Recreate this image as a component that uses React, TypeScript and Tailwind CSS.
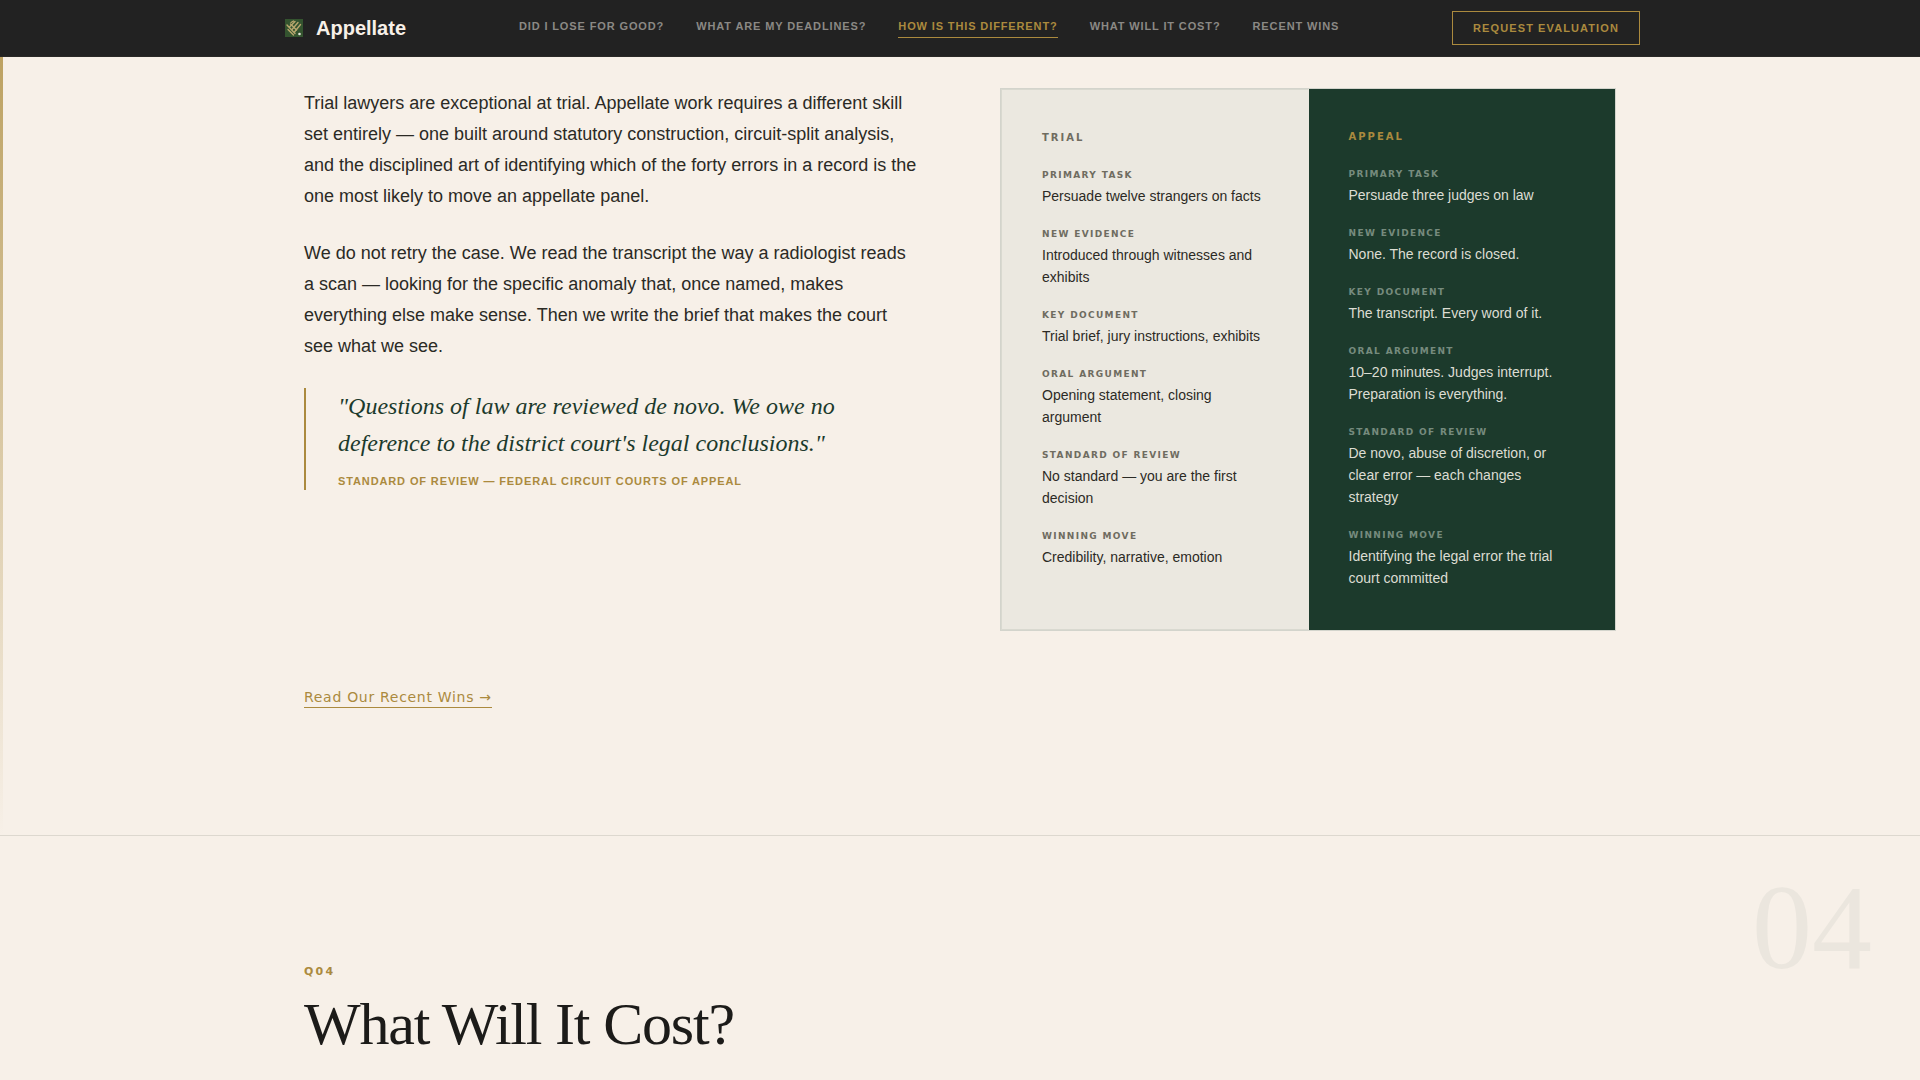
import clsx from 'clsx';

type NavItem = {
    label: string;
    href: string;
    active?: boolean;
};

type Row = {
    label: string;
    trial: string;
    appeal: string;
};

const navItems: NavItem[] = [
    { label: 'Did I Lose for Good?', href: '#q01' },
    { label: 'What Are My Deadlines?', href: '#q02' },
    { label: 'How Is This Different?', href: '#q03', active: true },
    { label: 'What Will It Cost?', href: '#q04' },
    { label: 'Recent Wins', href: '#wins' },
];

const rows: Row[] = [
    {
        label: 'Primary Task',
        trial: 'Persuade twelve strangers on facts',
        appeal: 'Persuade three judges on law',
    },
    {
        label: 'New Evidence',
        trial: 'Introduced through witnesses and exhibits',
        appeal: 'None. The record is closed.',
    },
    {
        label: 'Key Document',
        trial: 'Trial brief, jury instructions, exhibits',
        appeal: 'The transcript. Every word of it.',
    },
    {
        label: 'Oral Argument',
        trial: 'Opening statement, closing argument',
        appeal: '10–20 minutes. Judges interrupt. Preparation is everything.',
    },
    {
        label: 'Standard of Review',
        trial: 'No standard — you are the first decision',
        appeal: 'De novo, abuse of discretion, or clear error — each changes strategy',
    },
    {
        label: 'Winning Move',
        trial: 'Credibility, narrative, emotion',
        appeal: 'Identifying the legal error the trial court committed',
    },
];

const LogoMark = () => (
    <svg width="28" height="28" viewBox="0 0 28 28" aria-hidden="true">
        <rect x="5" y="5" width="18" height="18" fill="#34542f" />
        <g fill="none" stroke="#b9a76e" strokeWidth="1.4" strokeLinecap="round">
            <path d="M7 11l8 8.5M8 15.5l5.5 5.5M10.5 10l6 6" />
            <path d="M9.5 13l5.5-5.5M12 15.5l6-7M14.5 18l6-7.5M11 8.5l2.5-1.5" />
        </g>
        <circle cx="19.5" cy="20" r="1.3" fill="#e4e6da" />
    </svg>
);

const Header = () => (
    <header className="sticky top-0 z-10 bg-[#222222] border-b border-[#2a2927]">
        <div className="max-w-[1360px] h-14 mx-auto flex items-center justify-between">
            <a href="#top" className="flex items-center gap-2 text-xl font-bold text-[#f7f0e8]">
                <LogoMark />
                Appellate
            </a>
            <nav className="flex items-center gap-8">
                {navItems.map((item) => (
                    <a
                        key={item.href}
                        href={item.href}
                        className={clsx(
                            'pb-[3px] text-[11px] leading-4 font-bold uppercase tracking-[0.08em] border-b',
                            item.active
                                ? 'text-[#ab8a3e] border-[#ab8a3e]'
                                : 'text-[#8b8985] border-transparent'
                        )}
                    >
                        {item.label}
                    </a>
                ))}
            </nav>
            <button className="px-5 py-2 border border-[#ab8a3e] text-[11px] leading-4 font-bold uppercase tracking-widest text-[#ab8a3e]">
                Request Evaluation
            </button>
        </div>
    </header>
);

type ColumnProps = {
    title: string;
    side: 'trial' | 'appeal';
};

const ComparisonColumn = ({ title, side }: ColumnProps) => {
    const isAppeal = side === 'appeal';

    return (
        <div
            className={clsx(
                'pt-10 pb-[41px] pl-10',
                isAppeal ? 'pr-12 bg-[#1c3a2c]' : 'pr-10 bg-[#ebe8e0] border border-r-0 border-[#d9d9d0]'
            )}
        >
            <h3
                className={clsx(
                    'mb-6 font-[DejaVu_Sans,sans-serif] text-[10px] leading-[15px] font-bold uppercase tracking-[0.2em]',
                    isAppeal ? 'text-[#ab8a3e]' : 'text-[#6f6c60]'
                )}
            >
                {title}
            </h3>
            <dl className="space-y-[21px]">
                {rows.map((row) => (
                    <div key={row.label}>
                        <dt
                            className={clsx(
                                'mb-[3px] font-[DejaVu_Sans,sans-serif] text-[9px] leading-[13px] font-bold uppercase tracking-[0.15em]',
                                isAppeal ? 'text-[#768b7e]' : 'text-[#6f6c60]'
                            )}
                        >
                            {row.label}
                        </dt>
                        <dd
                            className={clsx(
                                'text-sm leading-[22px]',
                                isAppeal ? 'text-[#dcddd3]' : 'text-[#2b2a25]'
                            )}
                        >
                            {row[side]}
                        </dd>
                    </div>
                ))}
            </dl>
        </div>
    );
};

export default function App() {
    return (
        <div className="min-h-screen bg-[#f7f0e8] font-[Liberation_Sans,Arial,sans-serif] text-[#1c1b19]">
            <Header />
            <main>
                <section id="q03" className="relative pt-[31px] pb-[127px] border-b border-[#ddd8cf]">
                    <div className="absolute left-0 inset-y-0 w-[3px] bg-linear-to-b from-[#bda262] to-[#bda262]/0" />
                    <div className="max-w-[1360px] mx-auto px-6">
                        <div className="grid grid-cols-2 gap-20">
                            <div>
                                <div className="space-y-[26px] text-lg leading-[31px] text-[#2b2a25]">
                                    <p>
                                        Trial lawyers are exceptional at trial. Appellate work requires a different
                                        skill set entirely — one built around statutory construction, circuit-split
                                        analysis, and the disciplined art of identifying which of the forty errors in a
                                        record is the one most likely to move an appellate panel.
                                    </p>
                                    <p>
                                        We do not retry the case. We read the transcript the way a radiologist reads a
                                        scan — looking for the specific anomaly that, once named, makes everything else
                                        make sense. Then we write the brief that makes the court see what we see.
                                    </p>
                                </div>
                                <figure className="mt-[26px] pl-8 pb-px border-l-2 border-[#ab8a3e]">
                                    <blockquote className="font-[Liberation_Serif,serif] text-2xl leading-[37px] italic text-[#1c3a2c]">
                                        "Questions of law are reviewed de novo. We owe no deference to the district
                                        court's legal conclusions."
                                    </blockquote>
                                    <figcaption className="mt-[11px] text-[11px] leading-4 font-bold uppercase tracking-[0.08em] text-[#ab8a3e]">
                                        Standard of Review — Federal Circuit Courts of Appeal
                                    </figcaption>
                                </figure>
                            </div>
                            <div className="grid grid-cols-2 gap-px bg-[#ebe8e0] border border-[#d3d4cc]">
                                <ComparisonColumn title="Trial" side="trial" />
                                <ComparisonColumn title="Appeal" side="appeal" />
                            </div>
                        </div>
                        <div className="mt-14 flex">
                            <a
                                href="#wins"
                                className="border-b border-[#ab8a3e] font-[DejaVu_Sans,sans-serif] text-sm leading-5 tracking-wider text-[#ab8a3e]"
                            >
                                Read Our Recent Wins →
                            </a>
                        </div>
                    </div>
                </section>

                <section id="q04" className="relative pt-32">
                    <span
                        aria-hidden="true"
                        className="absolute top-8 right-12 font-[Liberation_Serif,serif] text-[120px] leading-none text-[#ebe6de]"
                    >
                        04
                    </span>
                    <div className="max-w-[1360px] mx-auto px-6">
                        <p className="mb-3 font-[DejaVu_Sans,sans-serif] text-[11px] leading-[15px] font-bold uppercase tracking-[0.2em] text-[#ab8a3e]">
                            Q04
                        </p>
                        <h2 className="font-[Liberation_Serif,serif] text-6xl leading-[66px] tracking-[-0.02em]">
                            What Will It Cost?
                        </h2>
                    </div>
                </section>
            </main>
        </div>
    );
}
